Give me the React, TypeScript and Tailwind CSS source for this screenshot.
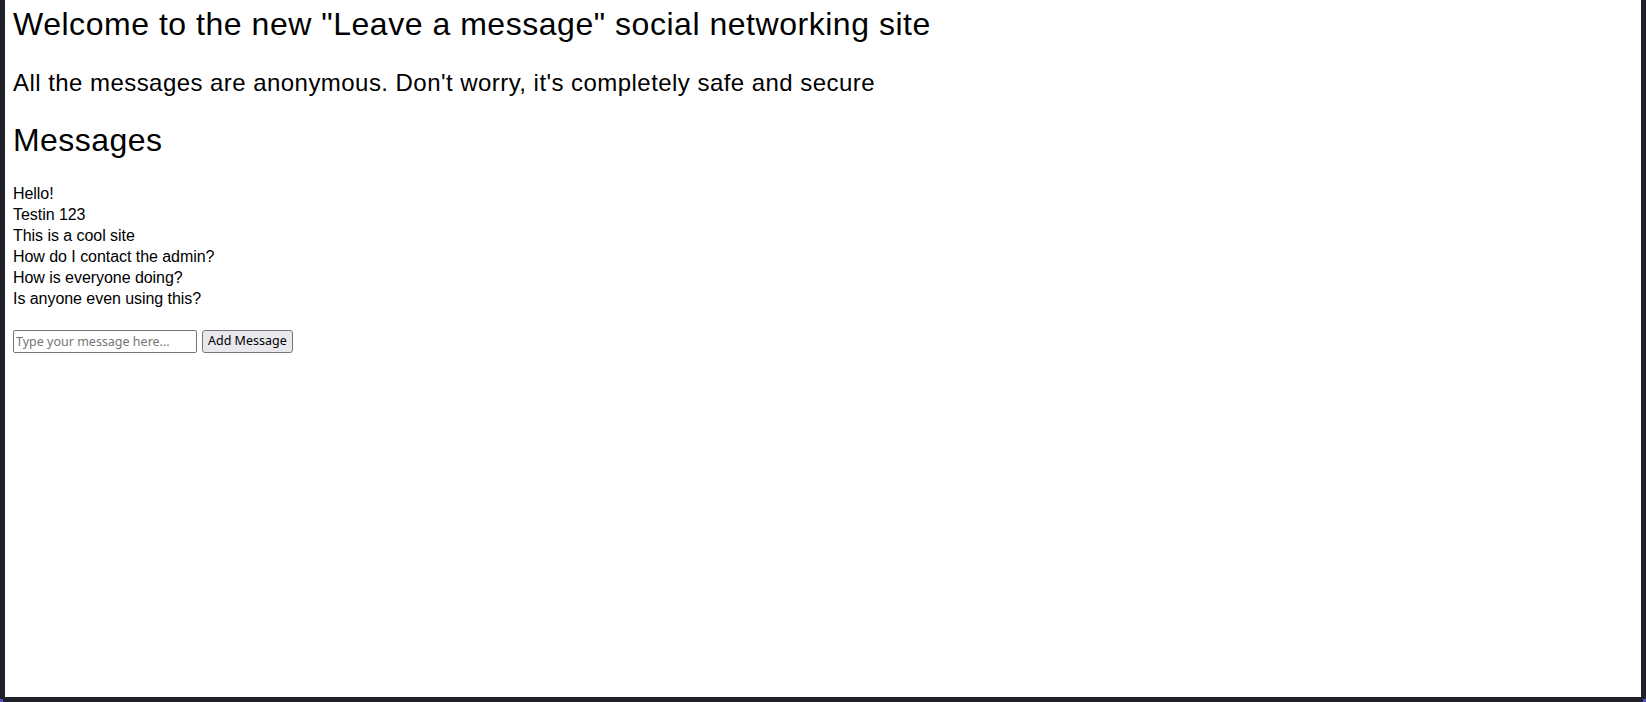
const MESSAGES = [
  'Hello!',
  'Testin 123',
  'This is a cool site',
  'How do I contact the admin?',
  'How is everyone doing?',
  'Is anyone even using this?',
]

export default function App() {
  return (
    <div className="relative h-[702px] w-full bg-[#1f202a] px-[5px] pb-[5px]">
      {/* window frame corners */}
      <span className="absolute bottom-0 left-0 h-[3px] w-[3px] bg-[#5a56c8]" />
      <span className="absolute bottom-0 right-0 h-[3px] w-[3px] bg-[#5a56c8]" />

      <div className="h-full bg-white px-2 pt-[3px] text-black font-['Liberation_Sans',Arial,sans-serif]">
        <h1 className="text-[32px] leading-[42px] tracking-[0.53px]">
          Welcome to the new "Leave a message" social networking site
        </h1>
        <h2 className="mt-[22px] text-[24px] leading-[31px] tracking-[0.45px]">
          All the messages are anonymous. Don't worry, it's completely safe and secure
        </h2>
        <h1 className="mt-[21px] text-[32px] leading-[42px] tracking-[0.45px]">Messages</h1>

        <div className="mt-[22px] text-[16px] leading-[21px] tracking-[-0.05px]">
          {MESSAGES.map((m) => (
            <div key={m}>{m}</div>
          ))}
        </div>

        <form className="mt-[21px] flex items-center gap-[5px] font-['Noto_Sans',sans-serif] text-[12.5px]">
          <input
            type="text"
            placeholder="Type your message here..."
            className="h-[23px] w-[184px] rounded-[2px] border border-[#767676] px-[2px] placeholder:text-[#757575] outline-none"
          />
          <button
            type="button"
            className="h-[23px] rounded-[3px] border border-[#767676] bg-[#e9e9ed] px-[5px] leading-none"
          >
            Add Message
          </button>
        </form>
      </div>
    </div>
  )
}
